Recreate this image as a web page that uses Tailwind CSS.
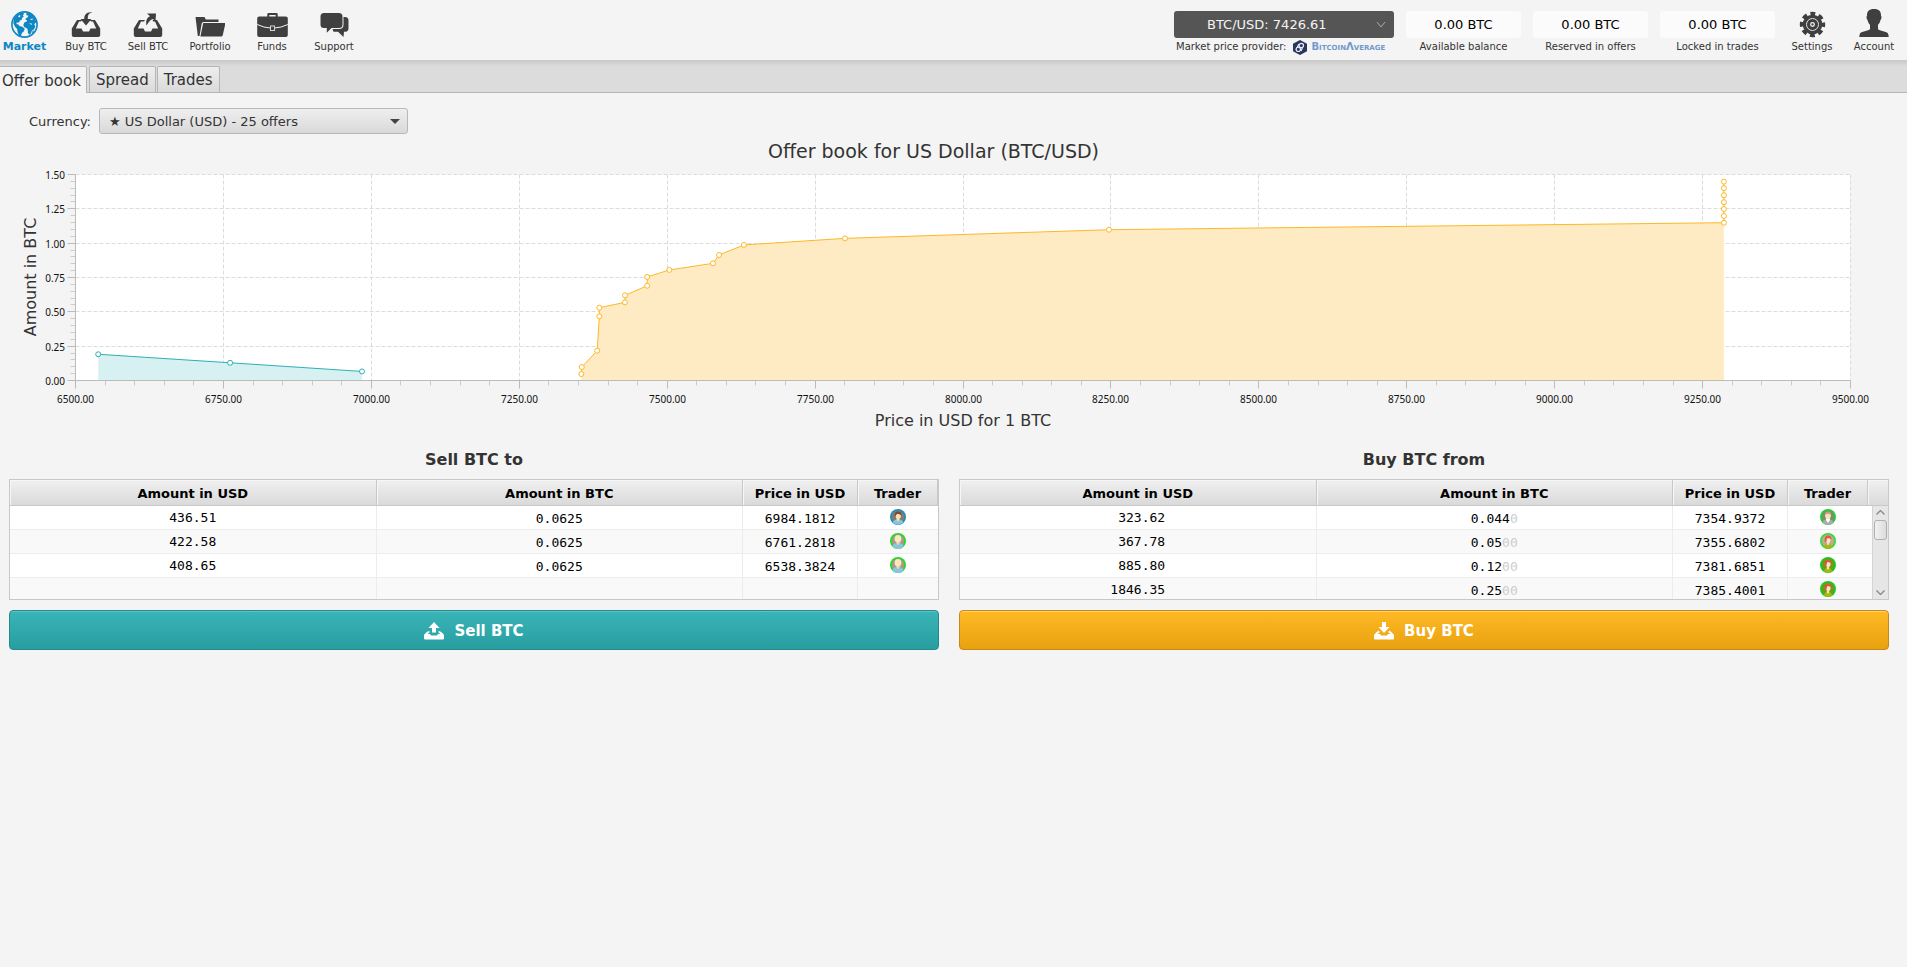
<!DOCTYPE html>
<html lang="en">
<head>
    <meta charset="UTF-8">
    <meta name="viewport" content="width=device-width, initial-scale=1.0">
    <title>Offer book</title>
    <script src="https://cdn.jsdelivr.net/npm/@tailwindcss/browser@4"></script>
</head>
<body class="min-h-screen bg-[#f4f4f4] font-['DejaVu_Sans',Verdana,sans-serif] text-[13px] text-[#333]">

    <!-- Shared symbols -->
    <svg class="hidden">
        <symbol id="trader-blue" viewBox="0 0 16 16">
            <circle cx="8" cy="8" r="8" fill="#1b8cc2"/><circle cx="8" cy="8" r="6.4" fill="#80806f"/>
            <path d="M2.6 13.6C3.4 11 5 10.4 8 10.4s4.800.6 5.400 3.200A8 8 0 0 1 2.600 13.600z" fill="#8cc4df"/>
            <path d="M6.500 8.500h3v2.200L8 12.400l-1.500-1.700z" fill="#f7deb0"/><ellipse cx="8.300" cy="6.800" rx="2.600" ry="3" fill="#fbe3b8"/>
            <path d="M4.800 7.500C4.200 3.800 6 2.600 8.200 2.600s3.800 1.300 3 4.200C10.400 5 8.600 4.800 7 5c-.6.800-1.200 1.500-2.200 2.500z" fill="#7a4a3c"/>
        </symbol>
        <symbol id="trader-bald" viewBox="0 0 16 16">
            <circle cx="8" cy="8" r="8" fill="#1fdb1f"/><circle cx="8" cy="8" r="6.4" fill="#a8988a"/>
            <path d="M2.200 13.600C2.800 10.800 5 10 8 10s5.200.8 5.800 3.600A8 8 0 0 1 2.200 13.600z" fill="#8cc4df"/>
            <path d="M6.500 8.500h3v2.300L8 12l-1.500-1.200z" fill="#f2d8a8"/><ellipse cx="8" cy="5.800" rx="3.400" ry="3.800" fill="#fde6bc"/>
        </symbol>
        <symbol id="trader-grey" viewBox="0 0 16 16">
            <circle cx="8" cy="8" r="8" fill="#1fd32d"/><circle cx="8" cy="8" r="6.400" fill="#78906f"/>
            <path d="M2.600 13.800C3.200 11 5 10.300 8 10.300s4.800.7 5.400 3.500A8 8 0 0 1 2.600 13.800z" fill="#a9acaf"/>
            <path d="M6.500 9h3l.6 2L8 14l-2.100-3z" fill="#fff"/><ellipse cx="8" cy="6.500" rx="2.900" ry="3.600" fill="#fbe3b8"/>
            <path d="M4.900 6C4.800 3.500 6.200 2.600 8 2.600s3.200.9 3.100 3.400C10 4.600 6 4.600 4.900 6z" fill="#c9a27c"/>
        </symbol>
        <symbol id="trader-pale" viewBox="0 0 16 16">
            <circle cx="8" cy="8" r="8" fill="#2bdc35"/><circle cx="8" cy="8" r="6.400" fill="#b9ad8c"/>
            <path d="M4 14.800C4.300 12 5.500 11 8 11s3.700 1 4 3.800A8 8 0 0 1 4 14.800z" fill="#a3b810"/>
            <path d="M7 8.500h2.200v2.500c0 1.500-2.200 1.500-2.200 0z" fill="#f7deb0"/><ellipse cx="8.300" cy="6.800" rx="2.300" ry="3.100" fill="#fde6bc"/>
            <path d="M5 9.500C4 4.500 5.700 2.600 8.200 2.600s3.600 1.600 3 4.200C10.200 5.200 8.400 5 7.300 5.200 6.500 6.400 7 8.500 5 9.500z" fill="#e0584a"/>
        </symbol>
        <symbol id="trader-green" viewBox="0 0 16 16">
            <circle cx="8" cy="8" r="8" fill="#1fc81d"/><circle cx="8" cy="8" r="6.200" fill="#6f9a1d"/>
            <path d="M4 14.800C4.300 12 5.500 11 8 11s3.700 1 4 3.800A8 8 0 0 1 4 14.800z" fill="#a3b810"/>
            <path d="M6.800 8.500h2.400v2.700c0 1.800-2.400 1.800-2.400 0z" fill="#f7deb0"/><ellipse cx="8.300" cy="6.800" rx="2.300" ry="3.100" fill="#fde6bc"/>
            <path d="M5 9.500C4 4.500 5.700 2.600 8.200 2.600s3.600 1.600 3 4.200C10.200 5.200 8.400 5 7.300 5.200 6.500 6.400 7 8.500 5 9.500z" fill="#d9583f"/>
        </symbol>
    </svg>

    <!-- Top bar -->
    <header class="flex h-[60px] items-start justify-between pt-[11px]">
        <nav class="flex text-[10px] leading-[18px]">
            <button class="mr-1.5 flex w-[49px] flex-col items-center text-[11px] font-bold text-[#0f87c3]">
                <svg class="h-[27px] w-[27px]" viewBox="0 0 27 27">
                    <circle cx="13.500" cy="13.500" r="12.600" fill="#f4f4f4" stroke="#0f87c3" stroke-width="1.600"/>
                    <g fill="#0f87c3">
                        <path d="M3 7.500C5 4 8 1.800 11.500 1.200l1.700 1.600-1.400 1.600 1 1.300-2 1.300.4 1.600-2.300 1-.8 2-2.300-.2-.4 1.700 2 .4 1 1.600 3 .6 2.300 2-.8 2.600-2 1.600-.9 3.200-1.600.5-1.700-4-.6-3.600L4 15.800 2.300 12z"/>
                        <path d="M15 2.400l3-.8 3.800 2.200L24.400 8l1.300 4.600-1.500-.8-.8 1.800 1 2.200-1.600 2.800-1.900 1-.8 2.700-1.700 1.400-1.500-1.700-.2-3.500-1.200-1.600-2.200-.6-1-2.300 1-2.500 2.300-.9.500-1.300-1.600-.5.500-1.900 1.900-.7.400-1.600-1.800-.4z"/>
                        <path d="M21.500 20l1.700-.8-1.100 2.500-1.200.6z"/>
                    </g>
                    <path d="M7.200 5l1.900-1 .2 1.400-1.400 1zM19.200 8.200l2.200-.8.6 1.100-2 .6zM18 12.200l2.600.2.600 1.300-1.300-.2z" fill="#f4f4f4"/>
                </svg>
                Market
            </button>
            <button class="flex w-[62px] flex-col items-center">
                <svg class="h-[27px] w-[30px]" viewBox="0 0 30 27">
                    <path d="M6 9h5.500l-1.800 1.500H8L4.800 17.500h5.700l1.500 3h6l1.500-3h5.700L22 10.500h-1.700L18.500 9H24l5.200 8.500V24q0 2-2 2H2.800q-2 0-2-2v-6.500z" fill="#3f3f3f"/>
                    <path d="M21.500 1.500C17 2 16.800 5 16.800 8h3.700L15 14.500 9.500 8h3.700C13.200 4 15.500.5 21.500 1.500z" fill="#3f3f3f"/>
                </svg>
                Buy BTC
            </button>
            <button class="flex w-[62px] flex-col items-center">
                <svg class="h-[27px] w-[30px]" viewBox="0 0 30 27">
                    <path d="M6 9h6l-1 1.500H8L4.800 17.500h5.700l1.500 3h6l1.500-3h5.700L22 10.500h-1.700L19.500 9H24l5.200 8.500V24q0 2-2 2H2.800q-2 0-2-2v-6.500z" fill="#3f3f3f"/>
                    <path d="M14 2.500h9l-.5 8-2.500-2.500c-3 .8-4 2.800-6.500 6.500C12.500 9.500 14 6.500 17 5.200z" fill="#3f3f3f"/>
                </svg>
                Sell BTC
            </button>
            <button class="flex w-[62px] flex-col items-center">
                <svg class="h-[27px] w-[30px]" viewBox="0 0 30 27">
                    <path d="M.5 6h9l1.300 2.500h12.700V11H8.500q-1.500 0-1.800 1.500L4.500 25H2.800z" fill="#3f3f3f"/>
                    <path d="M8.200 12h21.500q.800 0 .6.900L27.800 24q-.3 1.500-1.800 1.500H5.400z" fill="#3f3f3f"/>
                </svg>
                Portfolio
            </button>
            <button class="flex w-[62px] flex-col items-center">
                <svg class="h-[27px] w-[31px]" viewBox="0 0 31 27">
                    <path d="M10.300 6V3.300Q10.300 2 11.600 2h7.800q1.300 0 1.300 1.300V6h-2V4h-6.400v2z" fill="#3f3f3f"/>
                    <rect x=".2" y="5.500" width="30.600" height="20.500" rx="2" fill="#3f3f3f"/>
                    <path d="M.2 13.500Q7 16.800 13.500 17M30.800 13.500Q24 16.800 17.500 17" fill="none" stroke="#f4f4f4"/>
                    <rect x="13.500" y="15" width="4" height="4.500" fill="none" stroke="#d4d4d4"/>
                </svg>
                Funds
            </button>
            <button class="flex w-[62px] flex-col items-center">
                <svg class="h-[27px] w-[29px]" viewBox="0 0 29 27">
                    <path d="M23.500 6H25q3.500 0 3.500 3.500v8q0 3-3 3.300H24L23.500 26 18 20.800h-4.500L12.500 18H19q4.500 0 4.500-4.500z" fill="#3f3f3f"/>
                    <path d="M4 2h15q3.500 0 3.500 3.500v8q0 3.500-3.500 3.500h-7.500L6.800 21.800V17H4Q.5 17 .5 13.500v-8Q.5 2 4 2z" fill="#3f3f3f"/>
                </svg>
                Support
            </button>
        </nav>

        <div class="flex pr-0.5 text-[10px] leading-[18px]">
            <div class="mr-3 w-[220px]">
                <div class="relative">
                    <select aria-label="Market price" class="block h-[27px] w-full appearance-none rounded-[3px] bg-[#555] pl-[33px] text-[13px] text-[#f4f4f4]">
                        <option>BTC/USD: 7426.61</option>
                    </select>
                    <svg class="pointer-events-none absolute top-[10px] right-2 h-2 w-[10px]" viewBox="0 0 10 8"><path d="M1 1l4 5 4-5" fill="none" stroke="#aaa"/></svg>
                </div>
                <div class="flex items-center pl-0.5">
                    <span>Market price provider:</span>
                    <svg class="ml-[7px] h-[15px] w-[14px]" viewBox="0 0 14 15">
                        <path d="M7 0l7 3.800v7.400L7 15l-7-3.800V3.800z" fill="#2a3560"/>
                        <g fill="none" stroke="#e8ebf5" stroke-width="1.200"><circle cx="8.300" cy="5.500" r="2.200"/><circle cx="5.300" cy="9.300" r="2.200"/><path d="M9.500 7.500L8 11M4.200 7.500L5.800 4"/></g>
                    </svg>
                    <a href="#" class="ml-1 text-[10px] font-bold text-[#7399cc] [font-variant:small-caps]">BitcoinΛverage</a>
                </div>
            </div>
            <div class="mr-3 flex w-[115px] flex-col text-center">
                <input id="available" readonly value="0.00 BTC" class="h-[27px] w-full rounded-[3px] bg-[#fbfbfb] text-center text-[13px] text-black">
                <label for="available">Available balance</label>
            </div>
            <div class="mr-3 flex w-[115px] flex-col text-center">
                <input id="reserved" readonly value="0.00 BTC" class="h-[27px] w-full rounded-[3px] bg-[#fbfbfb] text-center text-[13px] text-black">
                <label for="reserved">Reserved in offers</label>
            </div>
            <div class="mr-1.5 flex w-[115px] flex-col text-center">
                <input id="locked" readonly value="0.00 BTC" class="h-[27px] w-full rounded-[3px] bg-[#fbfbfb] text-center text-[13px] text-black">
                <label for="locked">Locked in trades</label>
            </div>
            <button class="flex w-[62px] flex-col items-center">
                <svg class="h-[27px] w-[27px]" viewBox="0 0 27 27">
                    <circle cx="13.500" cy="13.500" r="9.800" fill="#3f3f3f"/>
                    <circle cx="13.500" cy="13.500" r="10.700" fill="none" stroke="#3f3f3f" stroke-width="4" stroke-dasharray="4.800 3.603" stroke-dashoffset="2.400"/>
                    <circle cx="13.500" cy="13.500" r="6" fill="none" stroke="#e0e0e0" stroke-width="1"/>
                    <circle cx="13.500" cy="13.500" r="1.800" fill="#3f3f3f" stroke="#f4f4f4" stroke-width="1.300"/>
                </svg>
                Settings
            </button>
            <button class="flex w-[62px] flex-col items-center">
                <svg class="h-[27px] w-[30px] overflow-visible" viewBox="0 0 30 27">
                    <path d="M15-2c5 0 7.300 2.500 7 7 .8.300.7 3-.6 4.200-.4 2-1.400 3.500-2.400 4.600V18c1 2 9.500 2.200 10.200 5l.6 3H.2l.6-3C1.500 20.200 10 20 11 18v-4.200c-1-1.100-2-2.600-2.400-4.600C7.300 8 7.200 5.300 8 5c-.3-4.500 2-7 7-7z" fill="#3f3f3f"/>
                </svg>
                Account
            </button>
        </div>
    </header>

    <!-- Tabs -->
    <div class="flex h-[33px] gap-px border-b border-[#b5b5b5] bg-[#dcdcdc] bg-linear-to-b from-[#c9c9c9] to-[#dcdcdc] to-20% pt-1.5 text-[15px]" role="tablist">
        <button role="tab" class="-mb-px rounded-tr-xs border-t border-r border-[#b5b5b5] bg-[#f4f4f4] pt-0.5 pr-[5px] pl-0.5">Offer book</button>
        <button role="tab" class="ml-px rounded-t-xs border border-b-0 border-[#b5b5b5] bg-linear-to-b from-[#eee] to-[#dadada] px-1.5 pt-0.5">Spread</button>
        <button role="tab" class="rounded-t-xs border border-b-0 border-[#b5b5b5] bg-linear-to-b from-[#eee] to-[#dadada] px-1.5 pt-0.5">Trades</button>
    </div>

    <main>
        <div class="flex items-center gap-2 pt-[15px] pl-[29px]">
            <label for="currency" class="pt-0.5">Currency:</label>
            <div class="relative">
                <select id="currency" class="block h-[26px] w-[309px] appearance-none rounded-[3px] border border-[#b8b8b8] bg-linear-to-b from-[#efefef] to-[#d9d9d9] pt-0.5 pl-[9px] text-[13px] text-[#333]">
                    <option>★ US Dollar (USD) - 25 offers</option>
                </select>
                <svg class="pointer-events-none absolute top-[11px] right-2 h-[5px] w-[10px]" viewBox="0 0 10 5"><path d="M0 0h10L5 5z" fill="#444"/></svg>
            </div>
        </div>

        <h2 class="mt-[5px] mb-px pr-10 text-center text-[19px] leading-6">Offer book for US Dollar (BTC/USD)</h2>
        <svg id="chart" class="block h-[270px] w-full"></svg>

        <div class="mt-3.5 grid grid-cols-2 gap-5 pr-[18px] pl-[9px]">
            <section>
                <h3 class="text-center text-[16px] leading-6 font-bold">Sell BTC to</h3>
                <div class="mt-[7px] h-[121px] overflow-hidden border border-[#c8c8c8] bg-white">
                    <table class="w-full table-fixed border-separate border-spacing-0 text-center text-black">
                        <colgroup><col><col><col class="w-[115px]"><col class="w-[80px]"></colgroup>
                        <thead>
                            <tr class="h-[26px] bg-linear-to-b from-[#f0f0f0] to-[#d9d9d9]">
                                <th class="border-r border-b border-[#c8c8c8] p-0 pt-0.5 shadow-[inset_1px_1px_0_#f6f6f6]">Amount in USD</th>
                                <th class="border-r border-b border-[#c8c8c8] p-0 pt-0.5 shadow-[inset_1px_1px_0_#f6f6f6]">Amount in BTC</th>
                                <th class="border-r border-b border-[#c8c8c8] p-0 pt-0.5 shadow-[inset_1px_1px_0_#f6f6f6]">Price in USD</th>
                                <th class="border-r border-b border-[#c8c8c8] p-0 pt-0.5 shadow-[inset_1px_1px_0_#f6f6f6]">Trader</th>
                            </tr>
                        </thead>
                        <tbody id="sell-rows"></tbody>
                    </table>
                </div>
                <button class="mt-2.5 flex h-10 w-full items-center justify-center gap-2.5 rounded-[4px] border border-[#23898c] bg-linear-to-b from-[#3ab4b8] to-[#279fa1] pt-0.5 text-[15px] font-bold text-white shadow-[inset_0_1px_0_#5fc3c6]">
                    <svg class="h-[18px] w-5" viewBox="0 0 20 18"><path d="M10 0l5.500 6H12v4.500H8V6H4.500zM5.500 9v1.500L3.500 12H6l1 1.500h6L14 12h2.500l-2-1.500V9l2.500.8 3 3v3.400q0 1.300-1.300 1.300H1.300Q0 17.500 0 16.200v-3.400l3-3z" fill="#fff"/></svg>
                    Sell BTC
                </button>
            </section>

            <section>
                <h3 class="text-center text-[16px] leading-6 font-bold">Buy BTC from</h3>
                <div class="relative mt-[7px] h-[121px] overflow-hidden border border-[#c8c8c8] bg-white">
                    <table class="w-full table-fixed border-separate border-spacing-0 text-center text-black">
                        <colgroup><col><col><col class="w-[115px]"><col class="w-[80px]"><col class="w-5"></colgroup>
                        <thead>
                            <tr class="h-[26px] bg-linear-to-b from-[#f0f0f0] to-[#d9d9d9]">
                                <th class="border-r border-b border-[#c8c8c8] p-0 pt-0.5 shadow-[inset_1px_1px_0_#f6f6f6]">Amount in USD</th>
                                <th class="border-r border-b border-[#c8c8c8] p-0 pt-0.5 shadow-[inset_1px_1px_0_#f6f6f6]">Amount in BTC</th>
                                <th class="border-r border-b border-[#c8c8c8] p-0 pt-0.5 shadow-[inset_1px_1px_0_#f6f6f6]">Price in USD</th>
                                <th class="border-r border-b border-[#c8c8c8] p-0 pt-0.5 shadow-[inset_1px_1px_0_#f6f6f6]">Trader</th>
                                <th class="border-b border-[#c8c8c8] p-0 pt-0.5 shadow-[inset_1px_1px_0_#f6f6f6]"></th>
                            </tr>
                        </thead>
                        <tbody id="buy-rows"></tbody>
                    </table>
                    <!-- Scroll bar -->
                    <div class="absolute top-[26px] right-0 bottom-0 flex w-4 flex-col items-center border-l border-[#d4d4d4] bg-[#e6e6e6] py-1">
                        <svg class="h-[5px] w-[9px]" viewBox="0 0 9 5"><path d="M.5 4.500l4-4 4 4" fill="none" stroke="#888" stroke-width="1.300"/></svg>
                        <div class="mt-[5px] h-5 w-[13px] rounded-[3px] border border-[#b0b0b0] bg-linear-to-r from-[#f2f2f2] to-[#dcdcdc]"></div>
                        <svg class="mt-auto h-[5px] w-[9px]" viewBox="0 0 9 5"><path d="M.5.500l4 4 4-4" fill="none" stroke="#888" stroke-width="1.300"/></svg>
                    </div>
                </div>
                <button class="mt-2.5 flex h-10 w-full items-center justify-center gap-2.5 rounded-[4px] border border-[#c48a18] bg-linear-to-b from-[#ffb924] to-[#e8a20f] pt-0.5 text-[15px] font-bold text-white shadow-[inset_0_1px_0_#ffd070]">
                    <svg class="h-[18px] w-5" viewBox="0 0 20 18"><path d="M8 0h4v5h3.500L10 11 4.500 5H8zM5 8.500l.8 1.700L3.500 12H6l1 1.500h6L14 12h2.500l-2.300-1.800.8-1.700 2 1.300 3 3v3.400q0 1.300-1.300 1.300H1.300Q0 17.500 0 16.200v-3.400l3-3z" fill="#fff"/></svg>
                    Buy BTC
                </button>
            </section>
        </div>
    </main>

    <script>
        // [usd, btc, trailing zeros, price, trader icon]
        const sellOffers = [
            ["436.51", "0.0625", "", "6984.1812", "trader-blue"],
            ["422.58", "0.0625", "", "6761.2818", "trader-bald"],
            ["408.65", "0.0625", "", "6538.3824", "trader-bald"],
            ["", "", "", "", ""]
        ];
        const buyOffers = [
            [" 323.62", "0.044", "0", "7354.9372", "trader-grey"],
            [" 367.78", "0.05", "00", "7355.6802", "trader-pale"],
            [" 885.80", "0.12", "00", "7381.6851", "trader-green"],
            ["1846.35", "0.25", "00", "7385.4001", "trader-green"]
        ];

        function renderRows(id, offers, hasScrollBar) {
            document.getElementById(id).innerHTML = offers.map(([usd, btc, zeros, price, trader]) => `
                <tr class="h-6 font-['DejaVu_Sans_Mono',monospace] whitespace-pre even:bg-[#f9f9f9]">
                    <td class="border-r border-b border-[#ececec] p-0">${usd}</td>
                    <td class="border-r border-b border-[#ececec] p-0 pt-0.5">${btc}<span class="text-[#ccc]">${zeros}</span></td>
                    <td class="border-r border-b border-[#ececec] p-0 pt-0.5">${price}</td>
                    <td class="border-b border-[#ececec] p-0 pb-px">${trader ? `<svg class="mx-auto block h-4 w-4"><use href="#${trader}"/></svg>` : ""}</td>
                    ${hasScrollBar ? '<td class="border-b border-[#ececec] p-0"></td>' : ""}
                </tr>
            `).join("");
        }

        // [price, accumulated amount]
        const bids = [[6538.4, 0.191], [6761.3, 0.129], [6984.2, 0.066]];
        const asks = [
            [7354.9, 0.047], [7355.7, 0.098], [7381.7, 0.217], [7385.4, 0.467], [7385.4, 0.53],
            [7428.7, 0.569], [7428.7, 0.62], [7466.2, 0.69], [7466.2, 0.754], [7503.7, 0.805],
            [7577.4, 0.853], [7587.7, 0.914], [7629.8, 0.987], [7800.5, 1.035], [8246.7, 1.098],
            [9286, 1.149], [9286, 1.198], [9286, 1.249], [9286, 1.298], [9286, 1.349], [9286, 1.4], [9286, 1.448]
        ];

        const chart = document.getElementById("chart");

        function drawChart() {
            const left = 75.5, top = 10.5, bottom = 216.5;
            const right = document.documentElement.clientWidth - 56.5;
            const x = price => left + (price - 6500) / 3000 * (right - left);
            const y = amount => bottom - amount / 1.5 * (bottom - top);
            const line = (x1, y1, x2, y2, more) => `<line x1="${x1}" y1="${y1}" x2="${x2}" y2="${y2}" ${more}/>`;
            const grid = 'stroke="#dcdcdc" stroke-dasharray="4 2"';
            const font = `font-family="'Noto Sans', sans-serif" font-size="10" fill="#111"`;
            let out = `<rect x="${left}" y="${top}" width="${right - left}" height="${bottom - top}" fill="#fff"/>`;

            for (let i = 0; i <= 60; i++) {
                const px = Math.floor(x(6500 + i * 50)) + 0.5;
                if (i % 5) {
                    out += line(px, bottom, px, bottom + 5, 'stroke="#ccc"');
                } else {
                    out += line(px, top, px, bottom, grid) + line(px, bottom, px, bottom + 8, 'stroke="#bbb"');
                    out += `<text x="${px}" y="239" text-anchor="middle" ${font}>${(6500 + i * 50).toFixed(2)}</text>`;
                }
            }
            for (let i = 0; i <= 30; i++) {
                const py = Math.floor(y(i * 0.05)) + 0.5;
                if (i % 5) {
                    out += line(left - 5, py, left, py, 'stroke="#ccc"');
                } else {
                    out += line(left, py, right, py, grid) + line(left - 8, py, left, py, 'stroke="#bbb"');
                    out += `<text x="65" y="${py + 4}" text-anchor="end" ${font}>${(i * 0.05).toFixed(2)}</text>`;
                }
            }

            for (const [points, stroke, fill] of [[bids, "#2db0b3", "#d7f1f2"], [asks, "#fdb827", "#feebc3"]]) {
                const path = points.map(([p, a]) => `${x(p)},${y(a)}`).join(" ");
                out += `<polygon points="${x(points[0][0])},${bottom} ${path} ${x(points.at(-1)[0])},${bottom}" fill="${fill}"/>`;
                out += `<polyline points="${path}" fill="none" stroke="${stroke}"/>`;
                out += points.map(([p, a]) => `<circle cx="${x(p)}" cy="${y(a)}" r="2.5" fill="#fff" stroke="${stroke}"/>`).join("");
            }

            out += line(left, top, left, bottom, 'stroke="#bbb"') + line(left, bottom, right, bottom, 'stroke="#bbb"');
            out += `<text x="${(left + right) / 2}" y="262" text-anchor="middle" font-size="16" fill="#333">Price in USD for 1 BTC</text>`;
            out += `<text transform="translate(36 113) rotate(-90)" text-anchor="middle" font-size="16" fill="#333">Amount in BTC</text>`;
            chart.innerHTML = out;
        }

        renderRows("sell-rows", sellOffers, false);
        renderRows("buy-rows", buyOffers, true);
        drawChart();
        window.addEventListener("resize", drawChart);
    </script>
</body>
</html>
